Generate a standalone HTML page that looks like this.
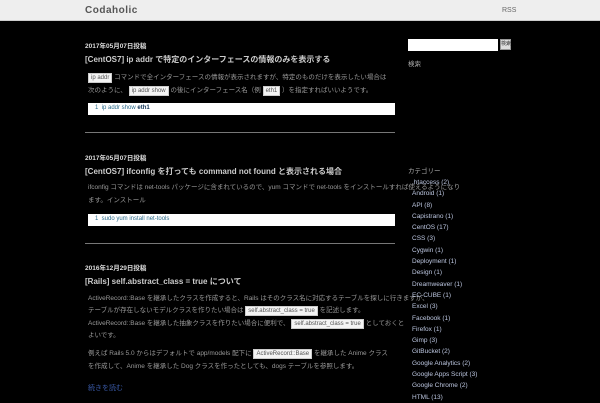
<!DOCTYPE html>
<html><head><meta charset="utf-8"><style>
*{margin:0;padding:0;box-sizing:border-box}
body{width:600px;height:400px;overflow:hidden;background:#000;font-family:"Liberation Sans","Noto Sans CJK JP",sans-serif;color:#ccc;font-size:7px;position:relative}
.hd{position:absolute;left:0;top:0;width:600px;height:21px;background:#eee;border-bottom:1px solid #ccc}
.logo{position:absolute;left:85px;top:5px;font-size:10px;font-weight:bold;color:#555;letter-spacing:.5px}
.rss{position:absolute;left:502px;top:7px;font-size:7px;color:#666}
.a{position:absolute;white-space:nowrap}
.date{font-size:6.5px;color:#ddd;font-weight:bold}
.t{font-size:8px;color:#ccc;font-weight:bold}
.p{font-size:6.5px;color:#999;line-height:13px}
.c{background:#f4f4f4;color:#555;padding:1px 2px;font-size:6px;border:1px solid #ccc}
.box{position:absolute;left:88px;width:307px;height:12px;background:#fff;font-size:6px;color:#2a6a8a;padding:2px 7px}
.hr{position:absolute;left:85px;width:310px;height:1px;background:#777}
.cat{position:absolute;left:412px;font-size:6.5px;color:#bcc6e0;line-height:11.3px}
</style></head><body>
<div class="hd"><div class="logo">Codaholic</div><div class="rss">RSS</div></div>

<div class="a date" style="left:85px;top:40px">2017年05月07日投稿</div>
<div class="a t" style="left:85px;top:54px">[CentOS7] ip addr で特定のインターフェースの情報のみを表示する</div>
<div class="a p" style="left:88px;top:71px"><span class="c">ip addr</span> コマンドで全インターフェースの情報が表示されますが、特定のものだけを表示したい場合は</div>
<div class="a p" style="left:88px;top:84px">次のように、 <span class="c">ip addr show</span> の後にインターフェース名（例 <span class="c">eth1</span> ）を指定すればいいようです。</div>
<div class="box" style="top:103px">1 &nbsp;ip addr show <b style="color:#135">eth1</b></div>
<div class="hr" style="top:132px"></div>

<div class="a date" style="left:85px;top:152px">2017年05月07日投稿</div>
<div class="a t" style="left:85px;top:166px">[CentOS7] ifconfig を打っても command not found と表示される場合</div>
<div class="a p" style="left:88px;top:181px">ifconfig コマンドは net-tools パッケージに含まれているので、yum コマンドで net-tools をインストールすれば使えるようになり</div>
<div class="a p" style="left:88px;top:194px">ます。インストール</div>
<div class="box" style="top:214px">1 &nbsp;sudo yum install net-tools</div>
<div class="hr" style="top:243px"></div>

<div class="a date" style="left:85px;top:262px">2016年12月29日投稿</div>
<div class="a t" style="left:85px;top:276px">[Rails] self.abstract_class = true について</div>
<div class="a p" style="left:88px;top:292px">ActiveRecord::Base を継承したクラスを作成すると、Rails はそのクラス名に対応するテーブルを探しに行きますが、</div>
<div class="a p" style="left:88px;top:304px">テーブルが存在しないモデルクラスを作りたい場合は <span class="c">self.abstract_class = true</span> を記述します。</div>
<div class="a p" style="left:88px;top:317px">ActiveRecord::Base を継承した抽象クラスを作りたい場合に便利で、 <span class="c">self.abstract_class = true</span> としておくと</div>
<div class="a p" style="left:88px;top:329px">よいです。</div>
<div class="a p" style="left:88px;top:347px">例えば Rails 5.0 からはデフォルトで app/models 配下に <span class="c">ActiveRecord::Base</span> を継承した Anime クラス</div>
<div class="a p" style="left:88px;top:360px">を作成して、Anime を継承した Dog クラスを作ったとしても、dogs テーブルを参照します。</div>
<div class="a" style="left:88px;top:383px;font-size:7px;color:#3a5aa8">続きを読む</div>

<div class="a" style="left:408px;top:39px;width:90px;height:12px;background:#fff"></div>
<div class="a" style="left:500px;top:39px;width:11px;height:11px;background:#ddd;border:1px solid #999;font-size:5px;color:#333;text-align:center;line-height:9px">検索</div>
<div class="a" style="left:408px;top:58px;font-size:6.5px;color:#aaa">検索</div>
<div class="a" style="left:408px;top:165px;font-size:6.5px;color:#aaa">カテゴリー</div>
<div class="cat" style="top:177px">.htaccess (2)<br>Android (1)<br>API (8)<br>Capistrano (1)<br>CentOS (17)<br>CSS (3)<br>Cygwin (1)<br>Deployment (1)<br>Design (1)<br>Dreamweaver (1)<br>EC-CUBE (1)<br>Excel (3)<br>Facebook (1)<br>Firefox (1)<br>Gimp (3)<br>GitBucket (2)<br>Google Analytics (2)<br>Google Apps Script (3)<br>Google Chrome (2)<br>HTML (13)</div>
</body></html>
